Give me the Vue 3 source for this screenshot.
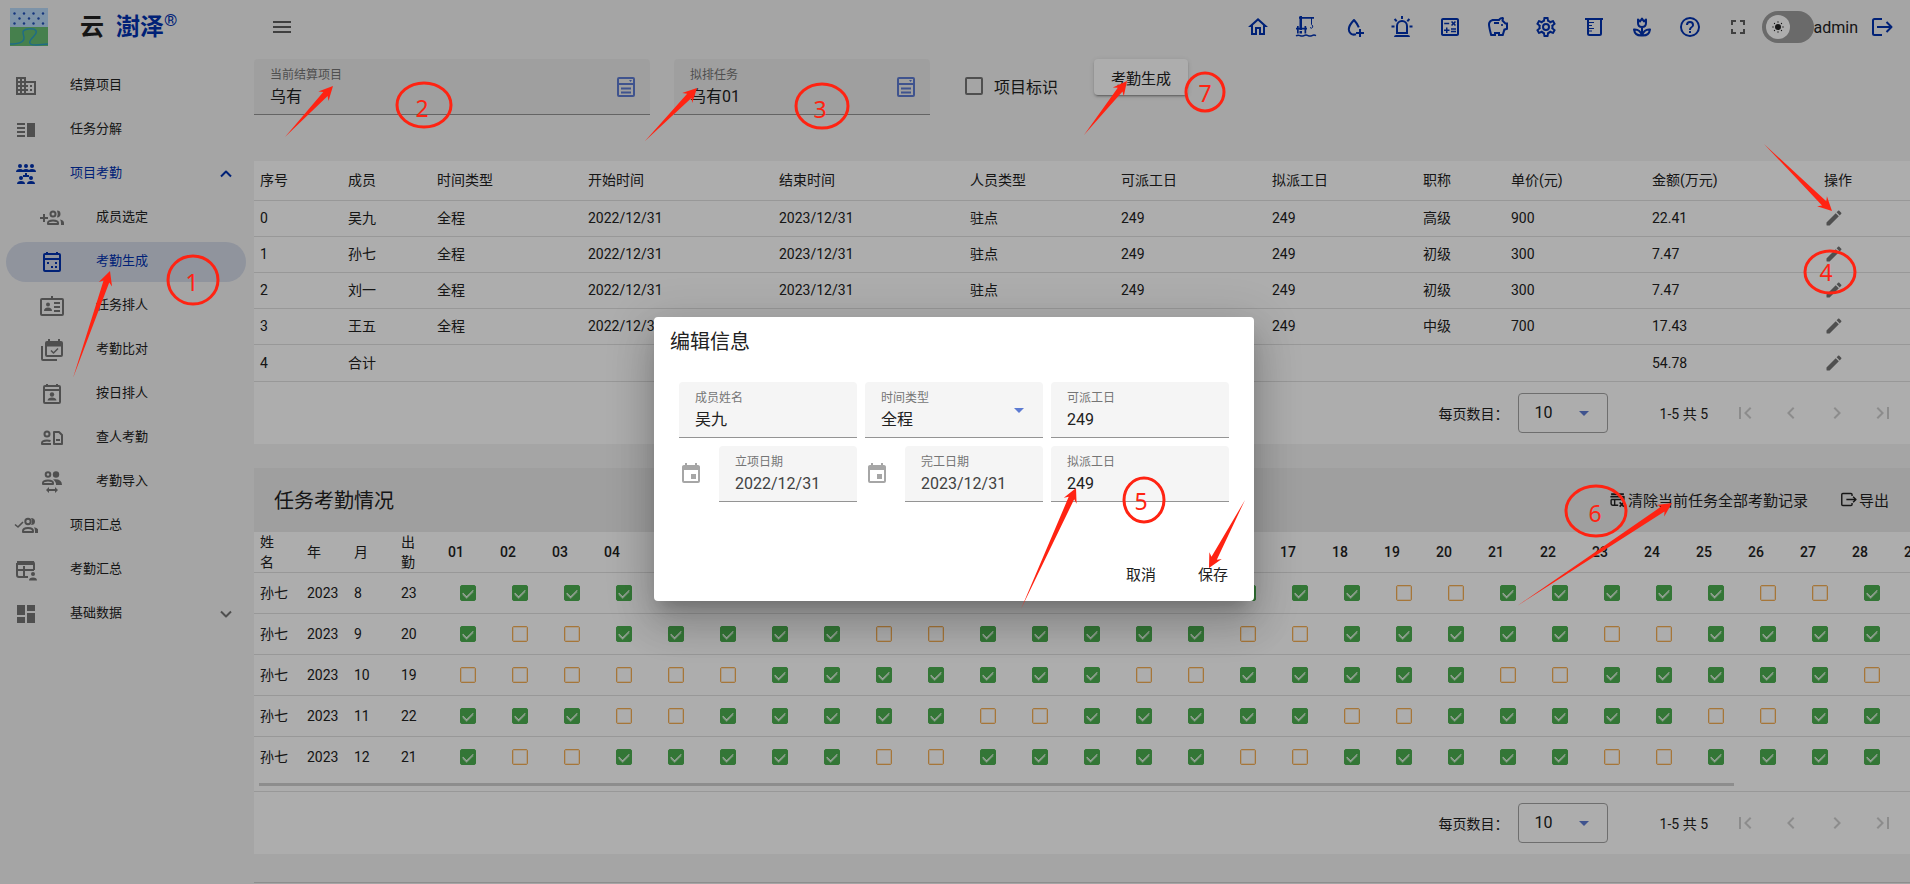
<script setup>
import { h, ref } from 'vue'

const stroke = (d, width = 2) =>
  `<path d="${d}" fill="none" stroke="currentColor" stroke-width="${width}" stroke-linejoin="round"/>`
const fill = (d) => `<path d="${d}"/>`

const icons = {
  menu: fill('M3 6H21V8H3ZM3 11H21V13H3ZM3 16H21V18H3Z'),
  home: fill('M12 5.69L17 10.19V18H15V12H9V18H7V10.19L12 5.69M12 3L2 12H5V20H11V14H13V20H19V12H22L12 3Z'),
  rig:
    fill('M5.5 1H8V15H5.5ZM5 2H20V3.7H5ZM2 12.8H13V14.6H2ZM3 11H4.7V18.5H3ZM10.5 11H12.2V18.5H10.5ZM5.5 16H8V18.5H5.5Z') +
    stroke('M17.5 3V9.5Q19.5 11 18.5 12.5Q17.5 14 16 12.5', 1) +
    stroke('M2 20.8Q4 19.6 6 20.6T10 20.6T14 20.6T18 20.6T22 20.6', 1.5),
  waterPlus:
    stroke('M14 19.2C9.5 20.8 6.8 17.4 6.8 14.2C6.8 10.5 12 5 12 5C12 5 15.6 9 16.8 12.3') +
    fill('M17 14H19V17H22V19H19V22H17V19H14V17H17Z'),
  alarm: fill('M6,6.9L3.87,4.78L5.28,3.37L7.4,5.5L6,6.9M13,1V4H11V1H13M20.13,4.78L18,6.9L16.6,5.5L18.72,3.37L20.13,4.78M4.5,10.5V12.5H1.5V10.5H4.5M19.5,10.5H22.5V12.5H19.5V10.5M6,20H18A2,2 0 0,1 20,22H4A2,2 0 0,1 6,20M12,5A6,6 0 0,1 18,11V19H6V11A6,6 0 0,1 12,5M12,7A4,4 0 0,0 8,11V17H16V11A4,4 0 0,0 12,7Z'),
  calculator: fill('M19,3H5C3.9,3 3,3.9 3,5V19C3,20.1 3.9,21 5,21H19C20.1,21 21,20.1 21,19V5C21,3.9 20.1,3 19,3M19,19H5V5H19V19M6.2,7.7H11.2V9.2H6.2V7.7M13,15.8H18V17.3H13V15.8M13,13.2H18V14.7H13V13.2M8,18H9.5V16H11.5V14.5H9.5V12.5H8V14.5H6V16H8V18M14.1,10.9L15.5,9.5L16.9,10.9L18,9.9L16.6,8.5L18,7.1L16.9,6L15.5,7.4L14.1,6L13,7.1L14.4,8.5L13,9.9L14.1,10.9Z'),
  piggy: fill('M15,10C15,9.45 15.45,9 16,9C16.55,9 17,9.45 17,10C17,10.55 16.55,11 16,11C15.45,11 15,10.55 15,10M8,9H13V7H8V9M22,7.5V14.47L19.18,15.41L17.5,21H12V19H10V21H4.5C4.5,21 2,12.54 2,9.5C2,6.46 4.46,4 7.5,4H12.5C13.41,2.79 14.86,2 16.5,2C17.33,2 18,2.67 18,3.5C18,3.71 17.96,3.9 17.88,4.08C17.74,4.42 17.62,4.81 17.56,5.23L19.83,7.5H22M20,9.5H19L15.5,6C15.5,5.35 15.59,4.71 15.76,4.09C14.79,4.34 14,5.06 13.67,6H7.5C5.57,6 4,7.57 4,9.5C4,11.38 5.22,16.15 6,19H8V17H14V19H16L17.56,13.85L20,13.03V9.5Z'),
  cog: fill('M12,8A4,4 0 0,1 16,12A4,4 0 0,1 12,16A4,4 0 0,1 8,12A4,4 0 0,1 12,8M12,10A2,2 0 0,0 10,12A2,2 0 0,0 12,14A2,2 0 0,0 14,12A2,2 0 0,0 12,10M10,22C9.75,22 9.54,21.82 9.5,21.58L9.13,18.93C8.5,18.68 7.96,18.34 7.44,17.94L4.95,18.95C4.73,19.03 4.46,18.95 4.34,18.73L2.34,15.27C2.21,15.05 2.27,14.78 2.46,14.63L4.57,12.97L4.5,12L4.57,11L2.46,9.37C2.27,9.22 2.21,8.95 2.34,8.73L4.34,5.27C4.46,5.05 4.73,4.96 4.95,5.05L7.44,6.05C7.96,5.66 8.5,5.32 9.13,5.07L9.5,2.42C9.54,2.18 9.75,2 10,2H14C14.25,2 14.46,2.18 14.5,2.42L14.87,5.07C15.5,5.32 16.04,5.66 16.56,6.05L19.05,5.05C19.27,4.96 19.54,5.05 19.66,5.27L21.66,8.73C21.79,8.95 21.73,9.22 21.54,9.37L19.43,11L19.5,12L19.43,13L21.54,14.63C21.73,14.78 21.79,15.05 21.66,15.27L19.66,18.73C19.54,18.95 19.27,19.04 19.05,18.95L16.56,17.95C16.04,18.34 15.5,18.68 14.87,18.93L14.5,21.58C14.46,21.82 14.25,22 14,22H10M11.25,4L10.88,6.61C9.68,6.86 8.62,7.5 7.85,8.39L5.44,7.35L4.69,8.65L6.8,10.2C6.4,11.37 6.4,12.64 6.8,13.8L4.68,15.36L5.43,16.66L7.86,15.62C8.63,16.5 9.68,17.14 10.87,17.38L11.24,20H12.76L13.13,17.39C14.32,17.14 15.37,16.5 16.14,15.62L18.57,16.66L19.32,15.36L17.2,13.81C17.6,12.64 17.6,11.37 17.2,10.2L19.31,8.65L18.56,7.35L16.15,8.39C15.38,7.5 14.32,6.86 13.12,6.62L12.75,4H11.25Z'),
  beaker:
    stroke('M3 4H21M6 4V18.5Q6 20 7.5 20H17.5Q19 20 19 18.5V4') +
    stroke('M6 7.5H12M6 10.5H10M6 13.5H12M6 16H10', 1),
  tulip:
    stroke('M8 4.5L10 6.5L12 3.5L14 6.5L16 4.5V8Q16 12 12 12Q8 12 8 8ZM12 12V21M12 20.5Q5 21 4 14.5Q10 14 12 20.5Q14 14 20 14.5Q19 21 12 20.5'),
  help: fill('M11,18H13V16H11V18M12,2A10,10 0 0,0 2,12A10,10 0 0,0 12,22A10,10 0 0,0 22,12A10,10 0 0,0 12,2M12,20C7.59,20 4,16.41 4,12C4,7.59 7.59,4 12,4C16.41,4 20,7.59 20,12C20,16.41 16.41,20 12,20M12,6A4,4 0 0,0 8,10H10A2,2 0 0,1 12,8A2,2 0 0,1 14,10C14,12 11,11.75 11,15H13C13,12.75 16,12.5 16,10A4,4 0 0,0 12,6Z'),
  fullscreen: fill('M5,5H10V7H7V10H5V5M14,5H19V10H17V7H14V5M17,14H19V19H14V17H17V14M10,17V19H5V14H7V17H10Z'),
  logout: stroke('M11 4H3.5Q2 4 2 5.500V18.500Q2 20 3.500 20H11') + stroke('M6 12H20.500M15.500 7L20.500 12L15.500 17'),
  sun:
    '<circle cx="12" cy="12" r="6"/>' +
    '<g><circle cx="12" cy="2" r="1.300"/><circle cx="12" cy="22" r="1.300"/><circle cx="2" cy="12" r="1.300"/><circle cx="22" cy="12" r="1.300"/><circle cx="5" cy="5" r="1.300"/><circle cx="19" cy="5" r="1.300"/><circle cx="5" cy="19" r="1.300"/><circle cx="19" cy="19" r="1.300"/></g>',
  domain: fill('M18,15H16V17H18M18,11H16V13H18M20,19H12V17H14V15H12V13H14V11H12V9H20M10,7H8V5H10M10,11H8V9H10M10,15H8V13H10M10,19H8V17H10M6,7H4V5H6M6,11H4V9H6M6,15H4V13H6M6,19H4V17H6M12,7V3H2V21H22V7H12Z'),
  split: fill('M3 15h8v-2H3v2zm0 4h8v-2H3v2zm0-8h8V9H3v2zm0-6v2h8V5H3zm10 0h8v14h-8V5z'),
  crowd:
    '<circle cx="6" cy="4" r="2"/><circle cx="12" cy="4" r="2"/><circle cx="18" cy="4" r="2"/><circle cx="7" cy="16" r="2"/><circle cx="17" cy="16" r="2"/>' +
    fill('M2 10Q2 7 6 7Q8 7 9 8Q10 7 12 7Q14 7 15 8Q16 7 18 7Q22 7 22 10ZM3 22Q3 19 7 19Q11 19 11 22ZM13 22Q13 19 17 19Q21 19 21 22ZM11 11H13V13H15V15H9V13H11Z'),
  groupAdd:
    fill('M0 11H3V8H5V11H8V13H5V16H3V13H0Z') +
    '<circle cx="13" cy="8" r="2.500" fill="none" stroke="currentColor" stroke-width="2"/>' +
    stroke('M8 18V17Q8 14.500 13 14.500Q18 14.500 18 17V18Z') +
    fill('M17 4.600Q20.500 4.600 20.500 8T17 11.400Q18.500 8 17 4.600M20 13.400Q24 14.300 24 17V19H21V17Q21 14.800 20 13.400'),
  calendarDots:
    stroke('M5 4H19Q20 4 20 5V20Q20 21 19 21H5Q4 21 4 20V5Q4 4 5 4M4 9H20M7 2V5M17 2V5') +
    fill('M7 12H9V14H7ZM11 16H13V18H11ZM15 16H17V18H15ZM15 12H17V14H15Z'),
  badge:
    stroke('M2 5H22Q23 5 23 6V20Q23 21 22 21H2Q1 21 1 20V6Q1 5 2 5') +
    '<circle cx="8" cy="10.500" r="2"/>' +
    fill('M4 17Q4 13.500 8 13.500Q12 13.500 12 17ZM14 8H20V10H14ZM14 12H20V14H14ZM14 16H20V18H14ZM11 2H13V6H11Z'),
  calendarStack:
    stroke('M7 4H21Q22 4 22 5V17Q22 18 21 18H7Q6 18 6 17V5Q6 4 7 4M2 8V21Q2 22 3 22H17') +
    stroke('M11 12.500L13.500 15L18 10.500', 1.5) +
    fill('M6 4H22V8.500H6ZM8 1H10V4H8ZM18 1H20V4H18Z'),
  calendarPerson:
    stroke('M5 4H19Q20 4 20 5V20Q20 21 19 21H5Q4 21 4 20V5Q4 4 5 4M4 8H20M7 2V5M17 2V5') +
    '<circle cx="12" cy="12.500" r="2.200"/>' +
    fill('M7.500 18.500Q8 15.500 12 15.500Q16 15.500 16.500 18.500Z'),
  personFile:
    '<circle cx="7" cy="8" r="2.500" fill="none" stroke="currentColor" stroke-width="2"/>' +
    stroke('M11 18H2V17Q2 14.500 7 14.500Q9 14.500 10.500 15M14 6H19L22 9V18H14Z') +
    fill('M16 13H20V15H16Z'),
  groupSwap:
    '<circle cx="8" cy="4.500" r="2.300" fill="none" stroke="currentColor" stroke-width="2"/><circle cx="16" cy="4.500" r="3.200"/>' +
    stroke('M3 14V13Q3 10.500 8 10.500Q13 10.500 13 13V14Z') +
    fill('M13 9.400Q22 8.500 22 15H16Q16.500 12 13 9.400M6 20L9 17V19H15V17L18 20L15 23V21H9V23Z'),
  groupCheck:
    stroke('M1 10.500L4 13L9 8', 1.6) +
    '<circle cx="14" cy="7.500" r="2.700" fill="none" stroke="currentColor" stroke-width="2"/>' +
    stroke('M9 18V17Q9 14 14 14Q19 14 19 17V18Z') +
    fill('M17 4Q21 4 21 7.500T17 11Q19 7.500 17 4M20 13.200Q24.500 14.200 24.500 17V19H21V17Q21 15 20 13.200'),
  tablePerson:
    stroke('M4 4H18Q20 4 20 6V12M14 19H5Q3 19 3 17V5M3 12H20M10 8V19', 2) +
    fill('M3 3H20V7H3Z') +
    '<circle cx="19" cy="16" r="2"/>' +
    fill('M15 22.500Q15 19.500 19 19.500Q23 19.500 23 22.500Z'),
  dashboard: fill('M13,3V9H21V3M13,21H21V11H13M3,21H11V15H3M3,13H11V3H3V13Z'),
  up: stroke('M7 14.500L12 9.500L17 14.500'),
  down: stroke('M7 9.500L12 14.500L17 9.500'),
  form:
    stroke('M5 3H19Q20 3 20 4V20Q20 21 19 21H5Q4 21 4 20V4Q4 3 5 3M4 9H20') +
    fill('M7 12.500H17V14.500H7ZM7 16.500H17V18.500H7ZM15 5H18L16.500 7Z'),
  pencil: fill('M20.71,7.04C21.1,6.65 21.1,6 20.71,5.63L18.37,3.29C18,2.9 17.35,2.9 16.96,3.29L15.12,5.12L18.87,8.87M3,17.25V20Q3 21 4 21H6.75L17.81,9.93L14.06,6.18L3,17.25Z'),
  first: fill('M18.41,16.59L13.82,12L18.41,7.41L17,6L11,12L17,18L18.41,16.59M6,6H8V18H6V6Z'),
  prev: fill('M15.41,16.58L10.83,12L15.41,7.41L14,6L8,12L14,18L15.41,16.58Z'),
  next: fill('M8.59,16.58L13.17,12L8.59,7.41L10,6L16,12L10,18L8.59,16.58Z'),
  last: fill('M5.59,7.41L10.18,12L5.59,16.59L7,18L13,12L7,6L5.59,7.41M16,6H18V18H16V6Z'),
  event: fill('M19,19H5V8H19M16,1V3H8V1H6V3H5C3.89,3 3,3.89 3,5V19A2,2 0 0,0 5,21H19A2,2 0 0,0 21,19V5C21,3.89 20.1,3 19,3H18V1M17,12H12V17H17V12Z'),
  tableRemove:
    stroke('M13 20H5Q3 20 3 18V12M3 12H21V8M8 12V20') +
    fill('M3 3H21V6H3ZM2 7H22V9H2Z') +
    stroke('M15 16L21 22M21 16L15 22', 2.4),
  exportOut: stroke('M17 7V5Q17 3.500 15.500 3.500H4Q2.500 3.500 2.500 5V19Q2.500 20.500 4 20.500H15.500Q17 20.500 17 19V17M9 12H22M18.500 8L22.500 12L18.500 16'),
}

const Icon = (props) => h('svg', { viewBox: '0 0 24 24', class: 'icon', 'aria-hidden': 'true', innerHTML: icons[props.name] })
Icon.props = ['name']

const navItems = [
  { label: '结算项目', icon: 'domain' },
  { label: '任务分解', icon: 'split' },
  { label: '项目考勤', icon: 'crowd', open: true, arrow: 'up' },
  { label: '成员选定', icon: 'groupAdd', child: true },
  { label: '考勤生成', icon: 'calendarDots', child: true, active: true },
  { label: '任务排人', icon: 'badge', child: true },
  { label: '考勤比对', icon: 'calendarStack', child: true },
  { label: '按日排人', icon: 'calendarPerson', child: true },
  { label: '查人考勤', icon: 'personFile', child: true },
  { label: '考勤导入', icon: 'groupSwap', child: true },
  { label: '项目汇总', icon: 'groupCheck' },
  { label: '考勤汇总', icon: 'tablePerson' },
  { label: '基础数据', icon: 'dashboard', arrow: 'down' },
]

const tools = [
  ['home', '首页'], ['rig', '平台'], ['waterPlus', '水务'], ['alarm', '告警'], ['calculator', '计算'],
  ['piggy', '财务'], ['cog', '设置'], ['beaker', '实验'], ['tulip', '花卉'], ['help', '帮助'],
]

const memberColumns = ['序号', '成员', '时间类型', '开始时间', '结束时间', '人员类型', '可派工日', '拟派工日', '职称', '单价(元)', '金额(万元)', '操作']
const members = [
  ['0', '吴九', '全程', '2022/12/31', '2023/12/31', '驻点', '249', '249', '高级', '900', '22.41'],
  ['1', '孙七', '全程', '2022/12/31', '2023/12/31', '驻点', '249', '249', '初级', '300', '7.47'],
  ['2', '刘一', '全程', '2022/12/31', '2023/12/31', '驻点', '249', '249', '初级', '300', '7.47'],
  ['3', '王五', '全程', '2022/12/31', '2023/12/31', '驻点', '249', '249', '中级', '700', '17.43'],
  ['4', '合计', '', '', '', '', '', '', '', '', '54.78'],
]

const attendance = [
  { month: 8, total: 23, off: [5, 6, 12, 13, 19, 20, 26, 27] },
  { month: 9, total: 20, off: [2, 3, 9, 10, 16, 17, 23, 24, 29, 30] },
  { month: 10, total: 19, off: [1, 2, 3, 4, 5, 6, 14, 15, 21, 22, 28, 29] },
  { month: 11, total: 22, off: [4, 5, 11, 12, 18, 19, 25, 26] },
  { month: 12, total: 21, off: [2, 3, 9, 10, 16, 17, 23, 24, 30, 31] },
]
const pad = (n) => String(n).padStart(2, '0')

const project = ref('乌有')
const task = ref('乌有01')
const form = ref({ name: '吴九', available: '249', start: '2022/12/31', end: '2023/12/31', planned: '249' })

const marks = [
  { n: 1, cx: 193, cy: 280, rx: 25, ry: 24, tx: 192, ty: 291 },
  { n: 2, cx: 424, cy: 105, rx: 27, ry: 22, tx: 422, ty: 117 },
  { n: 3, cx: 822, cy: 106, rx: 26, ry: 22, tx: 820, ty: 118 },
  { n: 4, cx: 1830, cy: 272, rx: 25, ry: 21, tx: 1826, ty: 281 },
  { n: 5, cx: 1144, cy: 500, rx: 20, ry: 22, tx: 1141, ty: 510 },
  { n: 6, cx: 1596, cy: 511, rx: 30, ry: 25, tx: 1595, ty: 522 },
  { n: 7, cx: 1205, cy: 92, rx: 19, ry: 19, tx: 1205, ty: 102 },
]
const arrows = [
  [73, 378, 110, 271], [285, 137, 333, 86], [645, 141, 697, 88], [1084, 135, 1127, 81],
  [1764, 144, 1832, 211], [1021, 609, 1076, 488], [1245, 500, 1209, 568], [1517, 606, 1672, 503],
].map(([x1, y1, x2, y2]) => {
  const len = Math.hypot(x2 - x1, y2 - y1)
  const ux = (x2 - x1) / len
  const uy = (y2 - y1) / len
  const at = (back, side) => `${x2 - ux * back - uy * side},${y2 - uy * back + ux * side}`
  return [`${x1},${y1}`, at(11, 3), at(14, 7), at(0, 0), at(14, -7), at(11, -3)].join(' ')
})
</script>

<template>
  <div class="layout">
    <aside class="sidebar">
      <div class="brand">
        <svg class="logo" viewBox="0 0 38 38" aria-hidden="true">
          <rect width="38" height="38" fill="#b9d9f8" />
          <rect y="19" width="38" height="19" fill="#68bd72" />
          <g fill="#2150b8">
            <circle v-for="i in 4" :key="i" :cx="i * 9.5 - 5" cy="5.500" r="1.200" />
            <circle v-for="i in 3" :key="'b' + i" :cx="i * 9.5" cy="10.500" r="1.200" />
            <circle v-for="i in 4" :key="'c' + i" :cx="i * 9.5 - 5" cy="15.500" r="1.200" />
          </g>
          <path d="M0 36C8 36 14 34 14 30C14 26 10 22 18 21C27 20 28 24 24 28C18 34 18 37 26 37L38 36" fill="none" stroke="#2fa0c4" stroke-width="1.500" />
        </svg>
        <span class="brand-name">云</span>
        <span class="brand-mark">澍泽<sup>®</sup></span>
      </div>
      <nav class="nav">
        <a v-for="item in navItems" :key="item.label" href="#" class="nav-item"
          :class="{ child: item.child, active: item.active, open: item.open }">
          <Icon :name="item.icon" class="nav-icon" />
          <span class="nav-label">{{ item.label }}</span>
          <Icon v-if="item.arrow" :name="item.arrow" class="nav-arrow" />
        </a>
      </nav>
    </aside>

    <main class="main">
      <header class="topbar">
        <button class="icon-button" aria-label="菜单"><Icon name="menu" /></button>
        <div class="tools">
          <button v-for="[name, label] in tools" :key="name" class="icon-button tool" :aria-label="label"><Icon :name="name" /></button>
          <button class="icon-button" aria-label="全屏"><Icon name="fullscreen" /></button>
          <button class="theme" role="switch" aria-checked="false" aria-label="主题">
            <span class="knob"><Icon name="sun" class="sun" /></span>
          </button>
          <span class="user">admin</span>
          <button class="logout" aria-label="退出"><Icon name="logout" /></button>
        </div>
      </header>

      <section class="filters">
        <div class="field project">
          <label for="project">当前结算项目</label>
          <input id="project" v-model="project" />
          <Icon name="form" class="field-icon" />
        </div>
        <div class="field task">
          <label for="task">拟排任务</label>
          <input id="task" v-model="task" />
          <Icon name="form" class="field-icon" />
        </div>
        <label class="flag"><input type="checkbox" class="flag-box" />项目标识</label>
        <button class="raised">考勤生成</button>
      </section>

      <section class="card">
        <table class="members">
          <colgroup><col v-for="(c, i) in memberColumns" :key="c" :class="'m' + i" /></colgroup>
          <thead>
            <tr><th v-for="c in memberColumns" :key="c">{{ c }}</th></tr>
          </thead>
          <tbody>
            <tr v-for="row in members" :key="row[0]">
              <td v-for="(cell, i) in row" :key="i">{{ cell }}</td>
              <td><button class="edit" aria-label="编辑"><Icon name="pencil" class="pencil" /></button></td>
            </tr>
          </tbody>
        </table>
        <div class="pager">
          <label for="size1">每页数目：</label>
          <div class="select-box"><select id="size1"><option>10</option></select></div>
          <span class="range">1-5 共 5</span>
          <button v-for="p in ['first', 'prev', 'next', 'last']" :key="p" class="page" :aria-label="p" disabled><Icon :name="p" /></button>
        </div>
      </section>

      <section class="card attendance">
        <div class="card-head">
          <h2>任务考勤情况</h2>
          <div class="actions">
            <button class="text-button"><Icon name="tableRemove" class="small" />清除当前任务全部考勤记录</button>
            <button class="text-button"><Icon name="exportOut" class="small" />导出</button>
          </div>
        </div>
        <div class="scroller">
          <table class="days">
            <colgroup><col v-for="i in 4" :key="i" class="info" /><col v-for="d in 31" :key="'d' + d" class="day" /></colgroup>
            <thead>
              <tr>
                <th>姓名</th><th>年</th><th>月</th><th>出勤</th>
                <th v-for="d in 31" :key="d" class="day-head">{{ pad(d) }}</th>
              </tr>
            </thead>
            <tbody>
              <tr v-for="row in attendance" :key="row.month">
                <td>孙七</td><td>2023</td><td>{{ row.month }}</td><td>{{ row.total }}</td>
                <td v-for="d in 31" :key="d" class="day-cell">
                  <input type="checkbox" class="tick" :checked="!row.off.includes(d)" :aria-label="row.month + '/' + d" />
                </td>
              </tr>
            </tbody>
          </table>
          <div class="rail"><div class="thumb"></div></div>
        </div>
        <div class="pager">
          <label for="size2">每页数目：</label>
          <div class="select-box"><select id="size2"><option>10</option></select></div>
          <span class="range">1-5 共 5</span>
          <button v-for="p in ['first', 'prev', 'next', 'last']" :key="p" class="page" :aria-label="p" disabled><Icon :name="p" /></button>
        </div>
      </section>
      <footer class="foot"></footer>
    </main>

    <div class="scrim">
      <section class="dialog" role="dialog" aria-modal="true" aria-labelledby="dialog-title">
        <h2 id="dialog-title">编辑信息</h2>
        <div class="form">
          <div class="field">
            <label for="name">成员姓名</label>
            <input id="name" v-model="form.name" />
          </div>
          <div class="field">
            <label for="kind">时间类型</label>
            <select id="kind"><option>全程</option></select>
            <span class="caret"></span>
          </div>
          <div class="field">
            <label for="available">可派工日</label>
            <input id="available" v-model="form.available" />
          </div>
          <div class="date">
            <Icon name="event" />
            <div class="field">
              <label for="start">立项日期</label>
              <input id="start" v-model="form.start" />
            </div>
          </div>
          <div class="date">
            <Icon name="event" />
            <div class="field">
              <label for="end">完工日期</label>
              <input id="end" v-model="form.end" />
            </div>
          </div>
          <div class="field">
            <label for="planned">拟派工日</label>
            <input id="planned" v-model="form.planned" />
          </div>
        </div>
        <div class="dialog-actions">
          <button class="text-button">取消</button>
          <button class="text-button">保存</button>
        </div>
      </section>
    </div>

    <svg class="marks" width="1910" height="884">
      <g v-for="m in marks" :key="m.n">
        <ellipse :cx="m.cx" :cy="m.cy" :rx="m.rx" :ry="m.ry" />
        <text :x="m.tx" :y="m.ty">{{ m.n }}</text>
      </g>
      <polygon v-for="points in arrows" :key="points" :points="points" />
    </svg>
  </div>
</template>

<style>
body {
  margin: 0;
  background: #f3f3f3;
  overflow-x: hidden;
}
</style>

<style scoped>
.layout {
  --ink: #212121;
  --blue: #0031b0;
  --soft-blue: #5d7bd2;
  position: relative;
  display: flex;
  min-height: 100vh;
  overflow: hidden;
  background: #f3f3f3;
  color: var(--ink);
  font-family: Roboto, "Noto Sans CJK SC", sans-serif;
  font-size: 14px;
}
.layout * {
  box-sizing: border-box;
}
button,
input,
select {
  font: inherit;
  color: inherit;
  background: none;
  border: 0;
  padding: 0;
  margin: 0;
  appearance: none;
}
.icon {
  display: block;
  width: 24px;
  height: 24px;
  flex: none;
  fill: currentColor;
}

.sidebar {
  flex: 0 0 254px;
}
.brand {
  display: flex;
  align-items: center;
  height: 54px;
  padding-left: 10px;
  font-size: 24px;
  font-weight: 700;
  line-height: 32px;
}
.logo {
  width: 38px;
  height: 38px;
}
.brand-name {
  margin-left: 32px;
}
.brand-mark {
  display: flex;
  margin-left: 12px;
  color: var(--blue);
}
.brand-mark sup {
  font-size: 17px;
  font-weight: 400;
  line-height: 18px;
}
.nav {
  display: flex;
  flex-direction: column;
  gap: 4px;
  padding: 12px 8px 0 6px;
}
.nav-item {
  display: flex;
  align-items: center;
  height: 40px;
  padding: 0 8px;
  border-radius: 20px;
  color: var(--ink);
  font-size: 13px;
  line-height: 18px;
  text-decoration: none;
}
.nav-item.child {
  padding-left: 34px;
}
.nav-icon {
  color: #757575;
}
.nav-label {
  flex: 1;
  margin-left: 32px;
  padding-bottom: 2px;
}
.nav-item.open,
.nav-item.open .icon,
.nav-item.active,
.nav-item.active .icon {
  color: var(--blue);
}
.nav-item.active {
  background: #d4dae8;
}
.nav-arrow {
  color: #757575;
}

.main {
  flex: 1;
  min-width: 0;
}
.topbar {
  display: flex;
  justify-content: space-between;
  align-items: center;
  height: 54px;
  margin-bottom: 5px;
  padding: 0 15px 0 4px;
}
.icon-button {
  display: flex;
  justify-content: center;
  width: 48px;
  color: #5f5f5f;
}
.icon-button.tool,
.logout {
  color: var(--blue);
}
.tools {
  display: flex;
  align-items: center;
}
.theme {
  width: 52px;
  height: 32px;
  padding: 4px;
  border-radius: 16px;
  background: #9c9c9c;
}
.knob {
  display: flex;
  align-items: center;
  justify-content: center;
  width: 24px;
  height: 24px;
  border-radius: 50%;
  background: #fff;
}
.sun {
  width: 12px;
  height: 12px;
}
.user {
  font-size: 16px;
}
.logout {
  margin-left: 13px;
}

.filters {
  display: flex;
  align-items: flex-start;
  height: 102px;
}
.field {
  position: relative;
  display: flex;
  flex-direction: column;
  min-width: 0;
  height: 56px;
  padding: 8px 16px 0;
  border-bottom: 1px solid #949494;
  border-radius: 4px 4px 0 0;
  background: #f5f5f5;
  font-size: 16px;
}
.filters .field {
  background: #ebebeb;
}
.field label {
  color: #757575;
  font-size: 12px;
  line-height: 16px;
}
.field input,
.field select {
  width: 100%;
  height: 28px;
  line-height: 28px;
}
.field-icon {
  position: absolute;
  top: 16px;
  right: 12px;
  color: var(--soft-blue);
}
.project {
  flex: 0 1 396px;
  margin-right: 24px;
}
.task {
  flex: 0 1 256px;
}
.flag {
  display: flex;
  align-items: center;
  gap: 11px;
  height: 54px;
  margin-left: 35px;
  font-size: 16px;
}
.flag-box {
  width: 18px;
  height: 18px;
  border: 2px solid #757575;
  border-radius: 2px;
}
.raised {
  height: 36px;
  margin-left: 36px;
  padding: 0 17px;
  border-radius: 4px;
  background: #fff;
  font-size: 15px;
  box-shadow: 0 3px 1px -2px rgba(0, 0, 0, 0.2), 0 2px 2px rgba(0, 0, 0, 0.14), 0 1px 5px rgba(0, 0, 0, 0.12);
}

.card {
  background: #fff;
}
table {
  width: 100%;
  border-collapse: collapse;
  table-layout: fixed;
}
th,
td {
  height: 36px;
  padding: 0 0 0 6px;
  border-bottom: 1px solid #e0e0e0;
  font-weight: 400;
  line-height: 20px;
  text-align: left;
}
.members th {
  height: 39px;
}
.members tr:last-child td {
  height: 37px;
}
.m0, .m1, .m8, .m11 { width: 89px; }
.m0, .m8 { width: 88px; }
.m2, .m5, .m6, .m7 { width: 151px; }
.m3, .m4 { width: 191px; }
.m9 { width: 141px; }
.m10 { width: 172px; }
.m11 { width: 92px; }
.edit {
  display: block;
  color: #757575;
}
.pencil {
  width: 20px;
  height: 20px;
}
.pager {
  display: flex;
  align-items: center;
  justify-content: flex-end;
  padding: 11px 4px 11px 0;
}
.select-box {
  position: relative;
  margin-left: 9px;
}
.select-box select {
  display: block;
  width: 90px;
  height: 40px;
  padding-left: 16px;
  border: 1px solid #a3a3a3;
  border-radius: 4px;
  font-size: 16px;
}
.select-box::after,
.caret {
  content: "";
  position: absolute;
  top: 18px;
  right: 19px;
  border: 5px solid transparent;
  border-top-color: var(--soft-blue);
  border-bottom: 0;
  pointer-events: none;
}
.field .caret {
  top: 26px;
}
.range {
  margin: 0 14px 0 52px;
}
.page {
  display: flex;
  justify-content: center;
  width: 46px;
  color: #cfcfcf;
}

.attendance {
  margin-top: 24px;
}
.card-head {
  display: flex;
  align-items: center;
  justify-content: space-between;
  height: 64px;
  padding: 0 21px 0 20px;
  background: #ebebeb;
}
h2 {
  margin: 0;
  font-size: 20px;
  font-weight: 400;
}
.actions {
  display: flex;
  gap: 32px;
}
.text-button {
  display: flex;
  align-items: center;
  gap: 2px;
  font-size: 15px;
}
.small {
  width: 17px;
  height: 17px;
}
.scroller {
  overflow: hidden;
  border-bottom: 1px solid #e0e0e0;
}
.days {
  width: 1800px;
}
.info {
  width: 47px;
}
.day {
  width: 52px;
}
.days th,
.days td {
  height: 41px;
}
.days th:not(.day-head) {
  padding-right: 20px;
}
.days tbody tr:last-child td {
  border-bottom: 0;
}
.days .day-head {
  font-weight: 500;
}
.days .day-cell {
  padding: 0;
}
.tick {
  display: block;
  position: relative;
  width: 16px;
  height: 16px;
  margin: 0 auto;
  border: 1px solid #f5ae55;
  outline: 1px solid rgba(245, 174, 85, 0.3);
  outline-offset: -2px;
  border-radius: 2px;
}
.tick:checked {
  border-color: #4caf50;
  outline: 0;
  background: #4caf50;
}
.tick:checked::after {
  content: "";
  position: absolute;
  top: 1px;
  left: 4px;
  width: 5px;
  height: 9px;
  border: solid #fff;
  border-width: 0 1px 1px 0;
  box-shadow: 1px 1px 0 rgba(255, 255, 255, 0.5);
  transform: rotate(45deg);
}
.rail {
  height: 13px;
  padding: 5px 12px 0 5px;
}
.thumb {
  width: 90%;
  height: 3px;
  background: #d0d0d0;
}
.foot {
  height: 29px;
  border-bottom: 1px solid #d0d0d0;
}

.scrim {
  position: absolute;
  inset: 0;
  display: flex;
  justify-content: center;
  align-items: flex-start;
  padding: 317px 2px 0 0;
  background: rgba(0, 0, 0, 0.32);
}
.dialog {
  width: 600px;
  padding: 9px 25px 8px;
  border-radius: 4px;
  background: #fff;
  box-shadow: 0 11px 15px -7px rgba(0, 0, 0, 0.2), 0 24px 38px 3px rgba(0, 0, 0, 0.14), 0 9px 46px 8px rgba(0, 0, 0, 0.12);
}
.dialog h2 {
  margin: 0 -9px;
  line-height: 32px;
}
.form {
  display: grid;
  grid-template-columns: repeat(3, 1fr);
  gap: 8px;
  margin-top: 24px;
}
.date {
  display: flex;
  align-items: center;
  gap: 16px;
  color: #a6a6a6;
}
.date .field {
  flex: 1;
  color: #424242;
}
.dialog-actions {
  display: flex;
  justify-content: flex-end;
  gap: 42px;
  margin-top: 55px;
  padding-right: 1px;
  line-height: 36px;
}

.marks {
  position: absolute;
  top: 0;
  left: 0;
  pointer-events: none;
  fill: #ff2312;
}
.marks ellipse {
  fill: none;
  stroke: #ff2312;
  stroke-width: 3px;
}
.marks text {
  font-family: "Noto Sans", sans-serif;
  font-size: 23px;
  text-anchor: middle;
}
</style>
